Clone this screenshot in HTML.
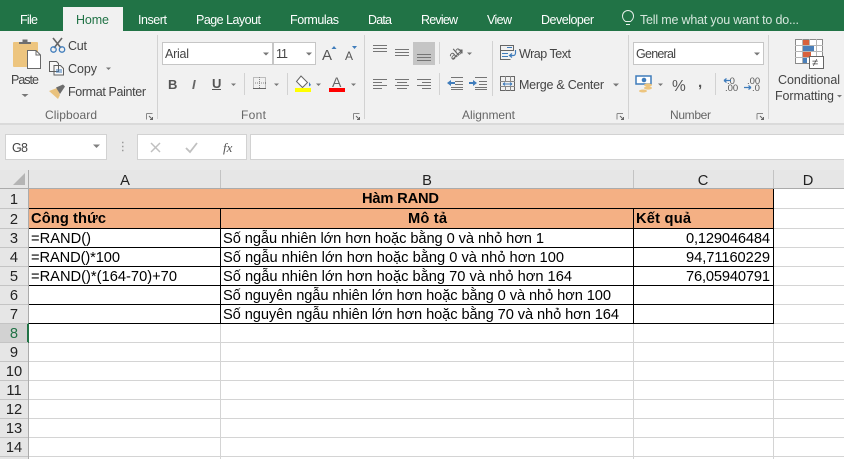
<!DOCTYPE html>
<html><head><meta charset="utf-8">
<style>
html,body{margin:0;padding:0;background:#fff;width:844px;height:459px;overflow:hidden}
svg{display:block}
text{font-family:"Liberation Sans",sans-serif;white-space:pre}
.t{font-size:12.5px;fill:#fff}
.r{font-size:12.5px;fill:#444}
.g{font-size:12px;fill:#666}
.c{font-size:14.67px;fill:#000}
.b{font-weight:bold}
.h{font-size:14.67px;fill:#222;text-anchor:middle}
.l{stroke:#757575;stroke-width:1;fill:none}
.s{stroke:#c9c9c9;stroke-width:1}
</style></head><body>
<svg width="844" height="459" viewBox="0 0 844 459" xmlns="http://www.w3.org/2000/svg">
<rect width="844" height="459" fill="#fff"/>
<!-- tab bar -->
<rect width="844" height="31" fill="#217346"/>
<rect x="63" y="7" width="60" height="24" fill="#f1f1f1"/>
<text class="t" x="20" y="24" textLength="18">File</text>
<text class="t" x="76" y="24" textLength="33" style="fill:#217346">Home</text>
<text class="t" x="138" y="24" textLength="29">Insert</text>
<text class="t" x="196" y="24" textLength="65">Page Layout</text>
<text class="t" x="290" y="24" textLength="49">Formulas</text>
<text class="t" x="368" y="24" textLength="24">Data</text>
<text class="t" x="421" y="24" textLength="37">Review</text>
<text class="t" x="487" y="24" textLength="25">View</text>
<text class="t" x="541" y="24" textLength="53">Developer</text>
<text class="t" x="640" y="24" textLength="159" style="fill:#d5e6dc">Tell me what you want to do...</text>
<g fill="none" stroke="#e6efe9" stroke-width="1"><path d="M625.500 21.500c-2-1.500-3-3.500-3-5.500a5.500 5.500 0 0 1 11 0c0 2-1 4-3 5.500zM626 24.500h4"/></g>
<!-- ribbon -->
<rect y="31" width="844" height="92" fill="#f1f1f1"/>
<rect y="123" width="844" height="2" fill="#dadada"/>
<rect y="125" width="844" height="45" fill="#e9e9e9"/>
<!-- group separators -->
<g fill="#d2d2d2">
<rect x="157" y="35" width="1" height="84"/><rect x="364" y="35" width="1" height="84"/>
<rect x="628" y="35" width="1" height="84"/><rect x="768" y="35" width="1" height="84"/>
<rect x="439" y="42" width="1" height="22"/><rect x="439" y="73" width="1" height="22"/>
<rect x="492" y="41" width="1" height="55"/>
<rect x="244" y="73" width="1" height="22"/><rect x="287" y="73" width="1" height="22"/>
<rect x="715" y="73" width="1" height="22"/>
</g>
<!-- paste -->
<rect x="13" y="42" width="25" height="25" rx="1" fill="#edc57f"/>
<path d="M19 44v-2h3.500v-2.500h5v2.500H31v2z" fill="#6f6f6f"/>
<path d="M27.500 50.500h8.500l4.500 4.500v13.500h-13z" fill="#fff" stroke="#6a6a6a"/>
<path d="M36 50.500v4.500h4.500" fill="none" stroke="#6a6a6a"/>
<text class="r" x="11" y="84" textLength="28">Paste</text>
<path d="M21.500 94h7l-3.500 3z" fill="#777"/>
<!-- cut -->
<path d="M53 38l8 10M62 38l-8 10" stroke="#666" stroke-width="1.600" fill="none"/>
<circle cx="53.500" cy="49.500" r="2.700" fill="none" stroke="#3f7cbb" stroke-width="1.300"/>
<circle cx="62" cy="49.500" r="2.700" fill="none" stroke="#3f7cbb" stroke-width="1.300"/>
<text class="r" x="68" y="50" textLength="19">Cut</text>
<!-- copy -->
<path d="M49.500 61.500h7l2 2v8h-9z M54 65.500h6.500l3 3v6.500H54z" fill="#f8f8f8" stroke="#5f5f5f"/>
<path d="M56 70h6M56 72h6" stroke="#3f7cbb"/>
<text class="r" x="68" y="73" textLength="29">Copy</text>
<path d="M106 67.500h5l-2.500 2.500z" fill="#777"/>
<!-- painter -->
<path d="M49 91l8-3 3 7-2 4z" fill="#e9c27e"/><path d="M56 87.500l7-3 2 2-5 7.500z" fill="#6d6d6d"/>
<text class="r" x="68" y="96" textLength="78">Format Painter</text>
<text class="g" x="45" y="119" textLength="52">Clipboard</text>
<path d="M146.500 113.500h6M146.500 113.500v6" stroke="#888" fill="none"/><path d="M149 116l3.500 3.500M152.500 117v2.500H150" stroke="#666" fill="none"/>
<!-- font boxes -->
<rect x="162.500" y="42.500" width="110" height="22" fill="#fff" stroke="#c6c6c6"/>
<rect x="273.500" y="42.500" width="42" height="22" fill="#fff" stroke="#c6c6c6"/>
<text x="165" y="58" font-size="12.500" fill="#444" textLength="24">Arial</text>
<text x="276" y="58" font-size="12.500" fill="#444" textLength="12">11</text>
<path d="M263 52.500h6l-3 3zM306 52.500h6l-3 3z" fill="#777"/>
<!-- grow/shrink -->
<text x="322" y="60" font-size="15" fill="#555" textLength="14">A</text>
<path d="M331.500 49l2.500-3 2.500 3z" fill="#3f7cbb"/>
<text x="345" y="60" font-size="12" fill="#555" textLength="10">A</text>
<path d="M352 46h5l-2.500 3z" fill="#3f7cbb"/>
<!-- BIU -->
<text x="168" y="89" font-size="13" font-weight="bold" fill="#555">B</text>
<text x="192" y="89" font-size="13" font-weight="bold" font-style="italic" fill="#666">I</text>
<text x="212" y="88" font-size="13" font-weight="bold" fill="#555">U</text>
<rect x="212" y="89" width="9" height="1" fill="#555"/>
<path d="M231 83.500h5l-2.500 2.500z" fill="#777"/>
<rect x="253.500" y="77.500" width="12" height="11" fill="none" stroke="#888" stroke-dasharray="1 1"/>
<path d="M259.500 77v12M253 83h13" stroke="#888" stroke-dasharray="1 1"/>
<rect x="253" y="88" width="13" height="1" fill="#666"/>
<path d="M274 83.500h5l-2.500 2.500z" fill="#777"/>
<!-- fill -->
<path d="M301 76l6.500 6.500-5 5-6-6z" fill="#fff" stroke="#666"/>
<path d="M309 82l2 3-2 1.500z" fill="#3f7cbb"/>
<rect x="295" y="88" width="16" height="4" fill="#ff0"/>
<path d="M316 83.500h5l-2.500 2.500z" fill="#777"/>
<text x="332" y="87" font-size="14" fill="#666" textLength="10">A</text>
<rect x="329" y="88" width="16" height="4" fill="#f00"/>
<path d="M351 83.500h5l-2.500 2.500z" fill="#777"/>
<text class="g" x="241" y="119" textLength="25">Font</text>
<path d="M353.500 113.500h6M353.500 113.500v6" stroke="#888" fill="none"/><path d="M356 116l3.500 3.500M359.500 117v2.500H357" stroke="#666" fill="none"/>
<!-- alignment -->
<rect x="413" y="42" width="22" height="23" fill="#c5c5c5"/>
<path class="l" d="M373 45.500h14M373 48.500h14M373 51.500h14 M395 49.500h14M395 52.500h14M395 55.500h14 M417 54.500h14M417 57.500h14M417 60.500h14"/>
<path class="l" d="M373 79.500h14M373 82.500h9M373 85.500h14M373 88.500h9 M395 79.500h14M397 82.500h10M395 85.500h14M397 88.500h10 M417 79.500h14M422 82.500h9M417 85.500h14M422 88.500h9"/>
<text x="448" y="58" font-size="12" fill="#666" transform="rotate(-40 454 53)">ab</text>
<path d="M453 59l9-9M458.500 50h3.500v3.500" stroke="#666" fill="none" stroke-width="1.100"/>
<path d="M467 52.500h5l-2.500 2.500z" fill="#777"/>
<path class="l" d="M451 77.500h12M455 81.500h8M455 84.500h8M451 87.500h12M451 89.500h12" stroke-opacity="1"/>
<path d="M447 83l4-3v2h4v2h-4v2z" fill="#3f7cbb"/>
<path class="l" d="M477 77.500h12M481 81.500h8M481 84.500h8M477 87.500h12M477 89.500h12" transform="translate(-2,0)"/>
<path d="M469 82h4v-2l4 3-4 3v-2h-4z" fill="#3f7cbb"/>
<!-- wrap -->
<rect x="500.500" y="45.500" width="13" height="5" fill="#f1f1f1" stroke="#666"/>
<path d="M500.500 51v8.500h10" fill="none" stroke="#666"/>
<path d="M507 47.500h5M502 53.500h6M502 56.500h6" stroke="#3f7cbb"/>
<path d="M515.500 50v3c0 1.500-1 2.500-2 2.500H510M512 53.500l-2.500 2 2.500 2" stroke="#3f7cbb" fill="none" stroke-width="1.200"/>
<text class="r" x="519" y="58" textLength="52">Wrap Text</text>
<!-- merge -->
<rect x="500.500" y="76.500" width="14" height="14" fill="none" stroke="#666"/>
<path d="M500 81.500h15M500 86.500h15M505.500 76v5M510.500 76v5M505.500 86v5M510.500 86v5" stroke="#888"/>
<path d="M503 84h9M503 84l2-1.500M503 84l2 1.500M512 84l-2-1.500M512 84l-2 1.500" stroke="#3f7cbb" fill="none"/>
<text class="r" x="519" y="89" textLength="85">Merge &amp; Center</text>
<path d="M613 83.500h6l-3 3z" fill="#777"/>
<text class="g" x="462" y="119" textLength="53">Alignment</text>
<path d="M617 113.500h6M617 113.500v6" stroke="#888" fill="none"/><path d="M620 116l3.500 3.500M623.500 117v2.500H621" stroke="#666" fill="none"/>
<!-- number -->
<rect x="633.500" y="42.500" width="130" height="22" fill="#fff" stroke="#c6c6c6"/>
<text class="r" x="636" y="58" textLength="40">General</text>
<path d="M754 52.500h6l-3 3z" fill="#777"/>
<rect x="636" y="76" width="15" height="8" fill="#fff" stroke="#3f7cbb" stroke-width="1.500"/>
<circle cx="644" cy="80" r="2.300" fill="#3f7cbb"/>
<ellipse cx="648" cy="85" rx="4" ry="1.600" fill="#edc57f"/><ellipse cx="648" cy="88" rx="4" ry="1.600" fill="#edc57f"/><ellipse cx="643" cy="91" rx="4" ry="1.500" fill="#edc57f"/>
<path d="M658 83.500h5l-2.500 2.500z" fill="#777"/>
<text x="672" y="91" font-size="15.500" fill="#555" textLength="15">%</text>
<text x="698" y="87" font-size="15" font-weight="bold" fill="#555">,</text>
<text x="727" y="84" font-size="9.500" fill="#555">.0</text>
<text x="725" y="91" font-size="9.500" fill="#555">.00</text>
<path d="M724 80.500h7M724 80.500l2.500-2M724 80.500l2.500 2" stroke="#3f7cbb" stroke-width="1.200" fill="none"/>
<text x="747" y="84" font-size="9.500" fill="#555">.00</text>
<text x="752" y="91" font-size="9.500" fill="#555">.0</text>
<path d="M744 87.500h7M751 87.500l-2.500-2M751 87.500l-2.500 2" stroke="#3f7cbb" stroke-width="1.200" fill="none"/>
<text class="g" x="670" y="119" textLength="41">Number</text>
<path d="M757 113.500h6M757 113.500v6" stroke="#888" fill="none"/><path d="M760 116l3.500 3.500M763.500 117v2.500H761" stroke="#666" fill="none"/>
<!-- conditional formatting -->
<rect x="795.500" y="39.500" width="27" height="24" fill="#fff" stroke="#8a8a8a"/>
<path d="M802.500 39v24M809.500 39v24M816.500 39v24M795 45.500h28M795 51.500h28M795 57.500h28" stroke="#b5b5b5"/>
<rect x="803" y="40" width="6" height="5" fill="#d8613c"/>
<rect x="803" y="46" width="11" height="5" fill="#4a7fb9"/>
<rect x="803" y="52" width="8" height="5" fill="#d8613c"/>
<rect x="803" y="58" width="4" height="5" fill="#4a7fb9"/>
<rect x="809.500" y="56.500" width="14" height="12" fill="#fff" stroke="#666"/>
<text x="812" y="66" font-size="11" fill="#444">≠</text>
<text class="r" x="778" y="84" textLength="62">Conditional</text>
<text class="r" x="775" y="100" textLength="59">Formatting</text>
<path d="M837 95h5l-2.500 2.500z" fill="#777"/>
<!-- formula bar -->
<rect x="5.500" y="134.500" width="101" height="25" fill="#fff" stroke="#d2d2d2"/>
<text x="12" y="152" font-size="12.500" fill="#444" textLength="16">G8</text>
<path d="M93 144.500h7l-3.500 3.500z" fill="#808080"/>
<path d="M122 142.500h1.500M122 146.500h1.500M122 150.500h1.500" stroke="#9a9a9a" stroke-width="1.500"/>
<rect x="137.500" y="134.500" width="109" height="25" fill="#fff" stroke="#d2d2d2"/>
<path d="M151 143l9 9M160 143l-9 9" stroke="#c0c0c0" stroke-width="1.500"/>
<path d="M186 148l4 4 7-9" stroke="#c0c0c0" stroke-width="1.800" fill="none"/>
<text x="223" y="152" font-size="13" font-style="italic" style="font-family:'Liberation Serif',serif" fill="#555">fx</text>
<rect x="250.500" y="134.500" width="600" height="25" fill="#fff" stroke="#d2d2d2"/>
<!-- sheet area -->
<rect y="170" width="844" height="18" fill="#e6e6e6"/>
<rect y="188" width="28" height="271" fill="#e6e6e6"/>
<path d="M25 173v12H13z" fill="#b4b4b4"/>
<rect x="220" y="170" width="1" height="18" fill="#c3c3c3"/><rect x="633" y="170" width="1" height="18" fill="#c3c3c3"/><rect x="773" y="170" width="1" height="18" fill="#c3c3c3"/>
<rect y="188" width="844" height="1" fill="#ababab"/>
<rect x="28" y="170" width="1" height="289" fill="#ababab"/>
<rect x="0" y="323" width="28" height="19" fill="#d2d2d2"/>
<rect x="27" y="323" width="2" height="20" fill="#217346"/>
<!-- grid -->
<g fill="#d4d4d4">
<rect x="220" y="323" width="1" height="136"/><rect x="633" y="323" width="1" height="136"/><rect x="773" y="189" width="1" height="270"/>
<rect x="29" y="342" width="815" height="1"/><rect x="29" y="361" width="815" height="1"/><rect x="29" y="380" width="815" height="1"/><rect x="29" y="399" width="815" height="1"/><rect x="29" y="418" width="815" height="1"/><rect x="29" y="437" width="815" height="1"/><rect x="29" y="456" width="815" height="1"/>
<rect x="774" y="208" width="70" height="1"/><rect x="774" y="228" width="70" height="1"/><rect x="774" y="247" width="70" height="1"/><rect x="774" y="266" width="70" height="1"/><rect x="774" y="285" width="70" height="1"/><rect x="774" y="304" width="70" height="1"/><rect x="774" y="323" width="70" height="1"/>
</g>
<g fill="#c4c4c4">
<rect x="0" y="208" width="28" height="1"/><rect x="0" y="228" width="28" height="1"/><rect x="0" y="247" width="28" height="1"/><rect x="0" y="266" width="28" height="1"/><rect x="0" y="285" width="28" height="1"/><rect x="0" y="304" width="28" height="1"/><rect x="0" y="323" width="28" height="1"/><rect x="0" y="342" width="28" height="1"/><rect x="0" y="361" width="28" height="1"/><rect x="0" y="380" width="28" height="1"/><rect x="0" y="399" width="28" height="1"/><rect x="0" y="418" width="28" height="1"/><rect x="0" y="437" width="28" height="1"/><rect x="0" y="456" width="28" height="1"/>
</g>
<!-- headers fill -->
<rect x="29" y="189" width="744" height="39" fill="#f4b084"/>
<!-- table borders -->
<g fill="#000">
<rect x="29" y="208" width="745" height="1"/><rect x="29" y="228" width="745" height="1"/><rect x="29" y="247" width="745" height="1"/><rect x="29" y="266" width="745" height="1"/><rect x="29" y="285" width="745" height="1"/><rect x="29" y="304" width="745" height="1"/><rect x="29" y="323" width="745" height="1"/>
<rect x="220" y="208" width="1" height="115"/><rect x="633" y="208" width="1" height="115"/><rect x="773" y="189" width="1" height="135"/>
</g>
<!-- column letters -->
<text class="h" x="125" y="185">A</text><text class="h" x="427" y="185">B</text><text class="h" x="703" y="185">C</text><text class="h" x="808" y="185">D</text>
<!-- row numbers -->
<text class="h" x="14" y="204">1</text><text class="h" x="14" y="224">2</text><text class="h" x="14" y="243">3</text><text class="h" x="14" y="262">4</text><text class="h" x="14" y="281">5</text><text class="h" x="14" y="300">6</text><text class="h" x="14" y="319">7</text><text class="h" x="14" y="338" style="fill:#217346">8</text><text class="h" x="14" y="357">9</text><text class="h" x="14" y="376">10</text><text class="h" x="14" y="395">11</text><text class="h" x="14" y="414">12</text><text class="h" x="14" y="433">13</text><text class="h" x="14" y="452">14</text>
<!-- cells -->
<text class="c b" x="362" y="203" textLength="77">Hàm RAND</text>
<text class="c b" x="31" y="223" textLength="75">Công thức</text>
<text class="c b" x="408" y="223" textLength="39">Mô tả</text>
<text class="c b" x="636" y="223" textLength="55">Kết quả</text>
<text class="c" x="31" y="243" textLength="60">=RAND()</text>
<text class="c" x="31" y="262" textLength="89">=RAND()*100</text>
<text class="c" x="31" y="281" textLength="146">=RAND()*(164-70)+70</text>
<text class="c" x="223" y="243" textLength="321">Số ngẫu nhiên lớn hơn hoặc bằng 0 và nhỏ hơn 1</text>
<text class="c" x="223" y="262" textLength="341">Số ngẫu nhiên lớn hơn hoặc bằng 0 và nhỏ hơn 100</text>
<text class="c" x="223" y="281" textLength="349">Số ngẫu nhiên lớn hơn hoặc bằng 70 và nhỏ hơn 164</text>
<text class="c" x="223" y="300" textLength="388">Số nguyên ngẫu nhiên lớn hơn hoặc bằng 0 và nhỏ hơn 100</text>
<text class="c" x="223" y="319" textLength="396">Số nguyên ngẫu nhiên lớn hơn hoặc bằng 70 và nhỏ hơn 164</text>
<text class="c" x="686" y="243" textLength="84">0,129046484</text>
<text class="c" x="686" y="262" textLength="84">94,71160229</text>
<text class="c" x="686" y="281" textLength="84">76,05940791</text>
</svg>
</body></html>
